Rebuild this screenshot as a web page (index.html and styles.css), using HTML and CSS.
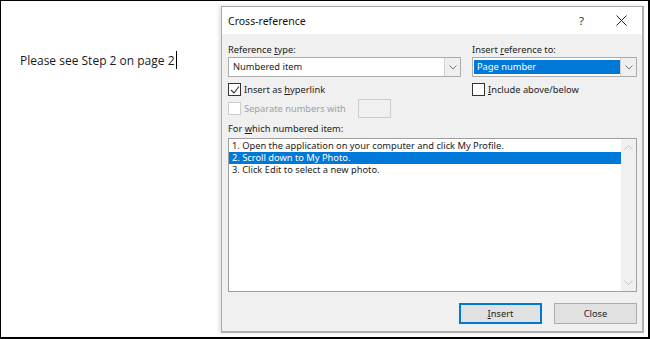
FILE: index.html
```html
<!DOCTYPE html>
<html lang="en">
<head>
    <meta charset="UTF-8">
    <title>Cross-reference</title>
    <link rel="stylesheet" href="styles.css">
</head>
<body>
    <div class="frame">
        <div class="doc">
            <span class="doc-text">Please see Step 2 on page 2</span><span class="caret"></span>
        </div>

        <div class="dialog">
            <div class="titlebar">
                <div class="title">Cross-reference</div>
                <div class="help">?</div>
                <div class="close-x">
                    <svg width="11" height="11" viewBox="0 0 11 11"><path d="M0.5 0.5 L10.5 10.5 M10.5 0.5 L0.5 10.5" stroke="#222" stroke-width="1" fill="none"/></svg>
                </div>
            </div>

            <div class="dialog-body">
                <div class="top-row">
                    <div class="col-left">
                        <div class="label">Reference <u>t</u>ype:</div>
                        <div class="combo">
                            <div class="combo-value">Numbered item</div>
                            <div class="combo-arrow">
                                <svg width="8" height="5" viewBox="0 0 8 5"><path d="M0.5 0.5 L4 4 L7.5 0.5" stroke="#777" stroke-width="1" fill="none"/></svg>
                            </div>
                        </div>
                        <div class="check-row">
                            <span class="checkbox checked">
                                <svg width="10" height="10" viewBox="0 0 10 10"><path d="M1 5 L4 8 L9 1.5" stroke="#333" stroke-width="1.1" fill="none"/></svg>
                            </span>
                            <span>Insert as <u>h</u>yperlink</span>
                        </div>
                        <div class="check-row disabled">
                            <span class="checkbox"></span>
                            <span>Separate numbers with</span>
                            <span class="small-input"></span>
                        </div>
                    </div>
                    <div class="col-right">
                        <div class="label">Insert <u>r</u>eference to:</div>
                        <div class="combo">
                            <div class="combo-value selected">Page number</div>
                            <div class="combo-arrow">
                                <svg width="8" height="5" viewBox="0 0 8 5"><path d="M0.5 0.5 L4 4 L7.5 0.5" stroke="#777" stroke-width="1" fill="none"/></svg>
                            </div>
                        </div>
                        <div class="check-row">
                            <span class="checkbox"></span>
                            <span><u>I</u>nclude above/below</span>
                        </div>
                    </div>
                </div>

                <div class="label list-label">For <u>w</u>hich numbered item:</div>
                <div class="listbox">
                    <div class="items">
                        <div class="item">1. Open the application on your computer and click My Profile.</div>
                        <div class="item active">2. Scroll down to My Photo.</div>
                        <div class="item">3. Click Edit to select a new photo.</div>
                    </div>
                    <div class="scrollbar">
                        <svg width="9" height="5" viewBox="0 0 9 5"><path d="M0.5 4.5 L4.5 0.5 L8.5 4.5" stroke="#c4c4c4" stroke-width="1" fill="none"/></svg>
                        <svg width="9" height="5" viewBox="0 0 9 5"><path d="M0.5 0.5 L4.5 4.5 L8.5 0.5" stroke="#c4c4c4" stroke-width="1" fill="none"/></svg>
                    </div>
                </div>

                <div class="buttons">
                    <button class="btn default"><u>I</u>nsert</button>
                    <button class="btn">Close</button>
                </div>
            </div>
        </div>
    </div>
</body>
</html>
```

FILE: styles.css
```css
body, html {
    margin: 0;
    padding: 0;
    background: #ffffff;
}

.frame {
    width: 650px;
    height: 339px;
    box-sizing: border-box;
    border-style: solid;
    border-color: #000000;
    border-width: 1px 2px 2px 1px;
    display: flex;
    align-items: flex-start;
    background: #ffffff;
    overflow: hidden;
}

.doc {
    width: 220px;
    padding: 50px 0 0 19px;
    box-sizing: border-box;
    display: flex;
    align-items: center;
    font-family: 'Open Sans', sans-serif;
    font-size: 12px;
    color: #1a1a1a;
}

.caret {
    display: inline-block;
    width: 1px;
    height: 18px;
    background: #000000;
    margin-left: 1px;
}

.dialog {
    width: 423px;
    height: 327px;
    margin-top: 5px;
    box-sizing: border-box;
    border: 1px solid #a9a9a9;
    border-right: 2px solid #b0b0b0;
    border-bottom: 2px solid #b0b0b0;
    box-shadow: -2px 0 4px rgba(0, 0, 0, 0.12);
    background: #f0f0f0;
    font-family: 'Noto Sans', sans-serif;
    font-size: 9.3px;
    color: #1b1b1b;
    display: flex;
    flex-direction: column;
}

.titlebar {
    height: 27px;
    flex-shrink: 0;
    background: #ffffff;
    display: flex;
    align-items: center;
    padding-left: 6px;
}

.title {
    flex: 1;
    font-size: 10.5px;
    color: #111111;
}

.help {
    width: 20px;
    font-size: 11.5px;
    color: #333333;
    margin-right: 17px;
}

.close-x {
    width: 20px;
    display: flex;
    margin-right: 6px;
}

.dialog-body {
    flex: 1;
    padding: 9px 5px 7px 6px;
    display: flex;
    flex-direction: column;
}

.top-row {
    display: flex;
    gap: 11px;
}

.col-left {
    width: 233px;
}

.col-right {
    flex: 1;
}

.label {
    height: 13px;
    line-height: 13px;
    margin-bottom: 1px;
}

.combo {
    height: 20px;
    box-sizing: border-box;
    border: 1px solid #adadad;
    background: #ffffff;
    display: flex;
}

.combo-value {
    flex: 1;
    padding-left: 4px;
    line-height: 18px;
}

.combo-value.selected {
    margin: 2px 0 2px 1px;
    padding-left: 3px;
    line-height: 14px;
    background: #0078d7;
    color: #ffffff;
}

.combo-arrow {
    width: 15px;
    border-left: 1px solid #d0d0d0;
    background: #efefef;
    display: flex;
    align-items: center;
    justify-content: center;
}

.check-row {
    display: flex;
    align-items: center;
    height: 13px;
    margin-top: 6px;
}

.check-row.disabled {
    color: #a0a0a0;
    height: 19px;
    margin-top: 3px;
}

.checkbox {
    width: 13px;
    height: 13px;
    box-sizing: border-box;
    border: 1px solid #333333;
    background: #ffffff;
    margin-right: 3px;
    display: flex;
    align-items: center;
    justify-content: center;
}

.disabled .checkbox {
    border-color: #cccccc;
}

.small-input {
    width: 33px;
    height: 19px;
    box-sizing: border-box;
    border: 1px solid #cccccc;
    background: #f0f0f0;
    margin-left: 12px;
}

.list-label {
    margin-top: 4px;
    margin-bottom: 3px;
}

.listbox {
    height: 154px;
    flex-shrink: 0;
    box-sizing: border-box;
    border: 1px solid #a0a0a0;
    background: #ffffff;
    display: flex;
}

.items {
    flex: 1;
    padding-top: 1px;
}

.item {
    height: 12px;
    line-height: 12px;
    padding-left: 3px;
    white-space: nowrap;
}

.item.active {
    background: #0078d7;
    color: #ffffff;
}

.scrollbar {
    width: 15px;
    background: #f0f0f0;
    display: flex;
    flex-direction: column;
    justify-content: space-between;
    align-items: center;
    padding: 6px 0;
}

.buttons {
    display: flex;
    justify-content: flex-end;
    gap: 12px;
    margin-top: 11px;
}

.btn {
    width: 83px;
    height: 21px;
    box-sizing: border-box;
    border: 1px solid #adadad;
    background: #e1e1e1;
    font-family: 'Noto Sans', sans-serif;
    font-size: 9.3px;
    color: #1b1b1b;
    padding: 0;
}

.btn.default {
    border: 2px solid #0078d7;
}
```
